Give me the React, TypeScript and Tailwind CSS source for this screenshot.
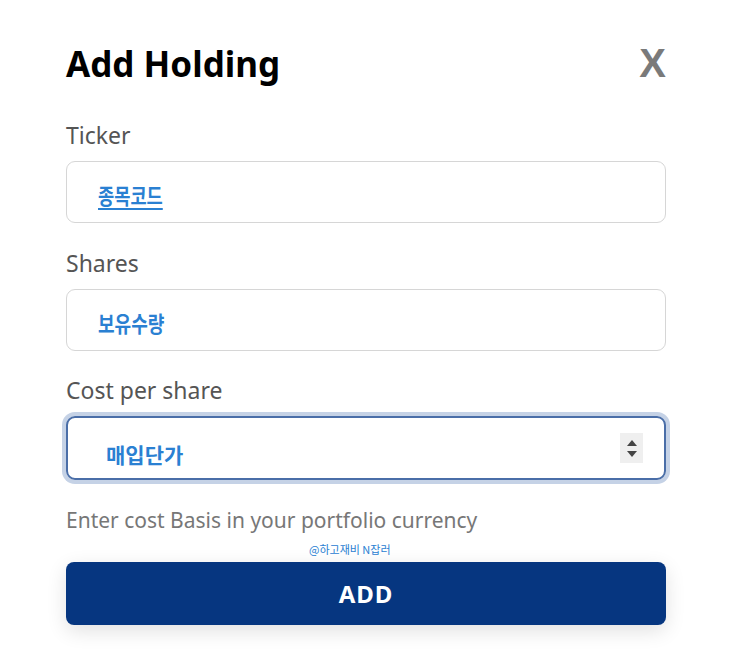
import { useState } from "react";

const handFont = { fontFamily: '"Noto Sans CJK KR", "Noto Sans", sans-serif' };

export default function App() {
  const [cost, setCost] = useState("");

  return (
    <div className="min-h-screen w-full bg-white" style={{ fontFamily: '"Noto Sans", "Open Sans", sans-serif' }}>
      <div className="w-[600px] ml-[66px] pt-[40px]">
        {/* Header */}
        <div className="flex items-center justify-between h-[46px]">
          <h1 className="text-[35px] font-bold text-black leading-none" style={{ fontFamily: '"Noto Sans", sans-serif' }}>
            Add Holding
          </h1>
          <button className="text-[40px] font-bold text-[#7a7a7a] leading-none" style={{ fontFamily: '"Liberation Sans", Arial, sans-serif' }}>
            X
          </button>
        </div>

        {/* Ticker */}
        <label className="block mt-[34px] text-[23px] text-[#555] leading-[30px]">Ticker</label>
        <div className="mt-[11px] h-[62px] rounded-[9px] border border-[#d6d6d6] flex items-center pl-[31px]">
          <span className="text-[22px] font-semibold text-[#2a80d2] underline underline-offset-4 decoration-[#2a80d2] scale-x-[0.8] origin-left inline-block mt-[4px]" style={handFont}>
            종목코드
          </span>
        </div>

        {/* Shares */}
        <label className="block mt-[25px] text-[23px] text-[#555] leading-[30px]">Shares</label>
        <div className="mt-[11px] h-[62px] rounded-[9px] border border-[#d6d6d6] flex items-center pl-[31px]">
          <span className="text-[22px] font-semibold text-[#2a80d2] scale-x-[0.82] origin-left inline-block mt-[4px]" style={handFont}>
            보유수량
          </span>
        </div>

        {/* Cost per share */}
        <label className="block mt-[24px] text-[23px] text-[#555] leading-[30px]">Cost per share</label>
        <div className="mt-[11px] h-[64px] rounded-[9px] border-2 border-[#4a6ea8] ring-4 ring-[#c5d2e6] flex items-center pl-[38px] pr-[21px]">
          <span className="flex-1 text-[21px] font-semibold text-[#2a80d2] mt-[14px]" style={handFont}>
            매입단가
          </span>
          <input
            value={cost}
            onChange={(e) => setCost(e.target.value)}
            className="hidden"
          />
          <div className="w-[23px] h-[30px] bg-[#efefef] flex flex-col items-center justify-center gap-[5px]">
            <svg width="10" height="6" viewBox="0 0 10 6"><path d="M0 6 L5 0 L10 6 Z" fill="#444" /></svg>
            <svg width="10" height="6" viewBox="0 0 10 6"><path d="M0 0 L5 6 L10 0 Z" fill="#444" /></svg>
          </div>
        </div>

        {/* Helper */}
        <p className="mt-[26px] text-[21px] text-[#777] leading-[28px]">Enter cost Basis in your portfolio currency</p>

        <div className="relative">
          <span className="absolute left-[243px] top-[10px] text-[11px] text-[#2a80d2] leading-none" style={handFont}>
            @하고재비 N잡러
          </span>
        </div>

        {/* Button */}
        <button className="mt-[28px] w-full h-[63px] rounded-[8px] bg-[#063680] text-white text-[24px] font-bold tracking-[1px] shadow-[0_6px_20px_rgba(0,0,0,0.12)]">
          ADD
        </button>
      </div>
    </div>
  );
}
